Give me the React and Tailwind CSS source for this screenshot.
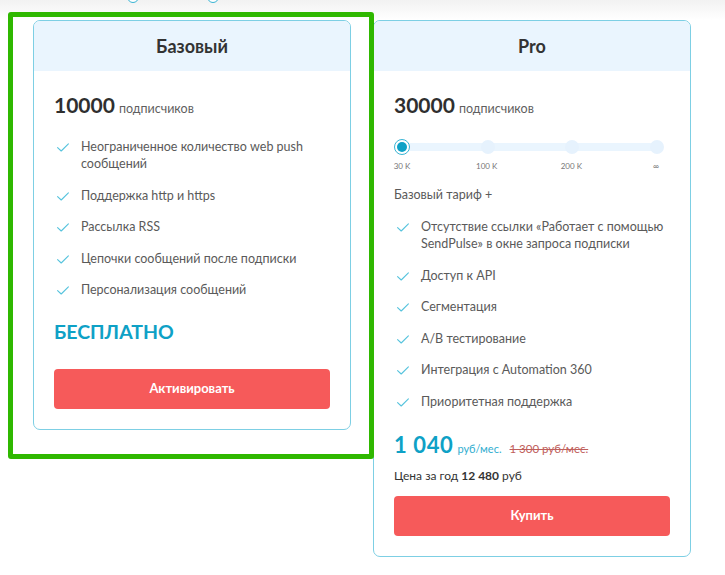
import React from 'react';

const basicFeatures = [
    'Неограниченное количество web push сообщений',
    'Поддержка http и https',
    'Рассылка RSS',
    'Цепочки сообщений после подписки',
    'Персонализация сообщений',
];

const proFeatures = [
    'Отсутствие ссылки «Работает с помощью SendPulse» в окне запроса подписки',
    'Доступ к API',
    'Сегментация',
    'A/B тестирование',
    'Интеграция с Automation 360',
    'Приоритетная поддержка',
];

const Check = () => (
    <svg width="12" height="9" viewBox="0 0 12 9" fill="none" className="mt-[5px] shrink-0">
        <path d="M0.6 4.6 L4.2 8 L11.4 0.8" stroke="#55c3dd" strokeWidth="1.1" strokeLinecap="round" strokeLinejoin="round" />
    </svg>
);

const FeatureList = ({ items }) => (
    <ul className="flex flex-col gap-[14.5px]">
        {items.map((item) => (
            <li key={item} className="flex items-start gap-[12px] pl-[3px] text-[12.5px] leading-[17px] text-[#5a5a5a]">
                <Check />
                <span>{item}</span>
            </li>
        ))}
    </ul>
);

const Subscribers = ({ count }) => (
    <div className="flex items-baseline gap-[4px] leading-[24px]">
        <span className="text-[21px] font-bold text-[#2f2f2f]">{count}</span>
        <span className="text-[12.5px] text-[#5f5f5f]">подписчиков</span>
    </div>
);

const Header = ({ title }) => (
    <div className="h-[50px] bg-[#eaf5fe] flex items-center justify-center rounded-t-[6px]">
        <h2 className="text-[18px] font-bold text-[#333]">{title}</h2>
    </div>
);

const Slider = () => {
    const labels = ['30 K', '100 K', '200 K', '∞'];
    return (
        <div className="w-[270px] mt-[18px]">
            <div className="relative h-[16px] flex items-center justify-between">
                <div className="absolute left-[4px] right-[4px] top-[4px] h-[8px] rounded-full bg-[#eaf5fe]" />
                <div className="relative w-[16px] h-[16px] rounded-full bg-white border border-[#39b4d4] flex items-center justify-center">
                    <div className="w-[10px] h-[10px] rounded-full bg-[#0ea1c6]" />
                </div>
                <div className="relative w-[14px] h-[14px] rounded-full bg-[#e6f2fd]" />
                <div className="relative w-[14px] h-[14px] rounded-full bg-[#e6f2fd]" />
                <div className="relative w-[14px] h-[14px] rounded-full bg-[#e6f2fd]" />
            </div>
            <div className="flex justify-between mt-[6px]">
                {labels.map((l) => (
                    <div key={l} className="w-[16px] flex justify-center whitespace-nowrap text-[8px] leading-[10px] text-[#777]">
                        {l}
                    </div>
                ))}
            </div>
        </div>
    );
};

const App = () => {
    return (
        <div
            className="relative w-[725px] h-[575px] overflow-hidden bg-white"
            style={{ fontFamily: 'Lato, "Open Sans", "Noto Sans", sans-serif' }}
        >
            {/* period switch above, scrolled almost out of view */}
            <div className="h-[20px] bg-gradient-to-b from-[#f2f2f2] to-white">
                <div className="h-[4px] overflow-hidden">
                    <div className="h-[24px] -mt-[15px] flex items-start pl-[127px] text-[13px] leading-[16px] text-[#333]">
                        <div className="mt-[6px] w-[12px] h-[12px] rounded-full border border-[#39b4d4] bg-white shrink-0" />
                        <span className="ml-[8px] w-[60px] whitespace-nowrap">Ежемесячно</span>
                        <div className="mt-[6px] w-[12px] h-[12px] rounded-full border border-[#39b4d4] bg-white shrink-0" />
                        <span className="ml-[8px] whitespace-nowrap text-[#999]">Год</span>
                    </div>
                </div>
            </div>

            <div className="flex items-start gap-[22px] pl-[33px]">
                {/* Basic */}
                <div className="w-[318px] h-[410px] rounded-[7px] border border-[#7dcfe4] flex flex-col">
                    <Header title="Базовый" />
                    <div className="px-[20px] pt-[22px] flex flex-col">
                        <Subscribers count="10000" />
                        <div className="mt-[17px]">
                            <FeatureList items={basicFeatures} />
                        </div>
                        <div className="mt-[22px] text-[19.5px] leading-[24px] font-bold text-[#0ea1c6]">БЕСПЛАТНО</div>
                        <button className="mt-[25px] h-[40px] w-full rounded-[4px] bg-[#f65a5a] text-white text-[13px] font-bold">
                            Активировать
                        </button>
                    </div>
                </div>

                {/* Pro */}
                <div className="w-[318px] h-[537px] rounded-[7px] border border-[#7dcfe4] flex flex-col">
                    <Header title="Pro" />
                    <div className="px-[20px] pt-[22px] flex flex-col">
                        <Subscribers count="30000" />
                        <Slider />
                        <div className="mt-[15px] text-[12.5px] leading-[17px] text-[#5a5a5a]">Базовый тариф +</div>
                        <div className="mt-[15px]">
                            <FeatureList items={proFeatures} />
                        </div>
                        <div className="mt-[23px] flex items-baseline leading-[24px]">
                            <span className="text-[22px] font-bold tracking-[0.6px] text-[#0ea1c6]">1 040</span>
                            <span className="ml-[4px] text-[11px] text-[#32aed0]">руб/мес.</span>
                            <span className="ml-[8px] text-[11.5px] text-[#c0605c] line-through">1 300 руб/мес.</span>
                        </div>
                        <div className="mt-[7px] text-[12px] leading-[16px] text-[#333]">
                            Цена за год <span className="font-bold">12 480</span> руб
                        </div>
                        <button className="mt-[12px] h-[40px] w-full rounded-[4px] bg-[#f65a5a] text-white text-[13px] font-bold">
                            Купить
                        </button>
                    </div>
                </div>
            </div>

            {/* highlight frame drawn over the basic plan */}
            <div className="absolute left-[8px] top-[12px] w-[366px] h-[447px] border-[5px] border-[#2fb800] rounded-[3px] pointer-events-none" />
        </div>
    );
};

export default App;
